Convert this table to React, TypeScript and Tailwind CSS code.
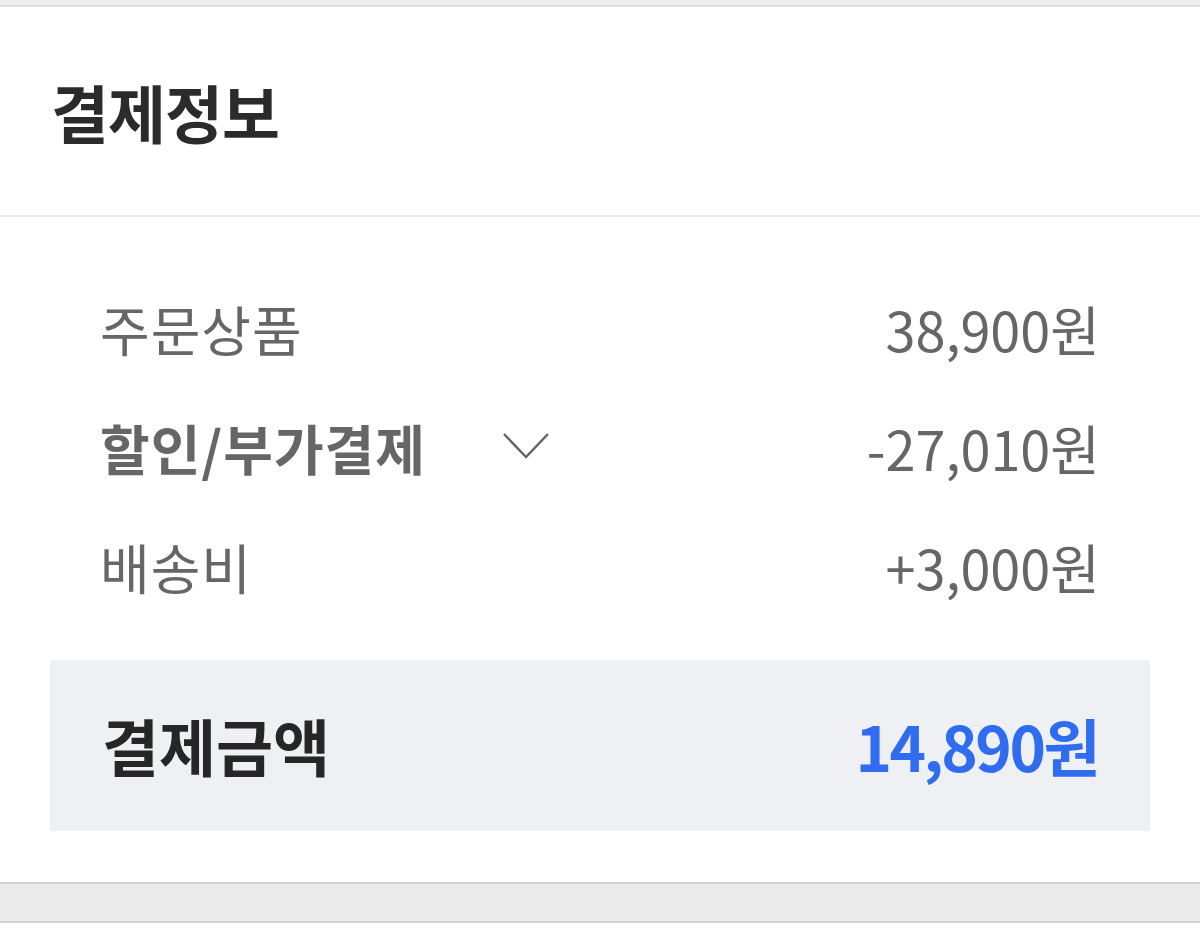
const font = { fontFamily: '"Noto Sans CJK KR", "Noto Sans", sans-serif' };

const Row = (props: { label: string; value: string; bold?: boolean; chevron?: boolean }) => (
  <div className="flex h-[119px] items-center justify-between">
    <div className="flex items-center">
      <span
        className={`text-[54px] tracking-[1px] text-[#666666] ${props.bold ? 'font-bold' : 'font-normal'}`}
      >
        {props.label}
      </span>
      {props.chevron && (
        <svg className="ml-[77px] mt-[-4px]" width="46" height="26" viewBox="0 0 46 26" fill="none">
          <path d="M1 1 L23 24 L45 1" stroke="#5f6270" strokeWidth="2.4" />
        </svg>
      )}
    </div>
    <span className="text-[54px] font-normal text-[#666666]">{props.value}</span>
  </div>
);

export default function App() {
  return (
    <div className="h-[941px] w-[1200px] overflow-hidden bg-white" style={font}>
      <div className="h-[7px] border-b-2 border-[#dedede] bg-[#ededed]" />
      <div className="flex h-[210px] items-center border-b-2 border-[#e6e6e6] pl-[51px]">
        <h2 className="text-[63px] font-bold tracking-[-1px] text-[#2b2b2b]">결제정보</h2>
      </div>
      <div className="px-[100px] pt-[52px]">
        <Row label="주문상품" value="38,900원" />
        <Row label="할인/부가결제" value="-27,010원" bold chevron />
        <Row label="배송비" value="+3,000원" />
      </div>
      <div className="mx-[50px] mt-[34px] flex h-[171px] items-center justify-between bg-[#eff0f4] pl-[52px] pr-[52px]">
        <span className="text-[62px] font-bold text-[#262626]">결제금액</span>
        <span className="text-[62px] font-bold tracking-[-2.5px] text-[#2f6cf0]">14,890원</span>
      </div>
      <div className="mt-[51px] h-[41px] border-y-2 border-[#d2d2d2] bg-[#ebebeb]" />
    </div>
  );
}
